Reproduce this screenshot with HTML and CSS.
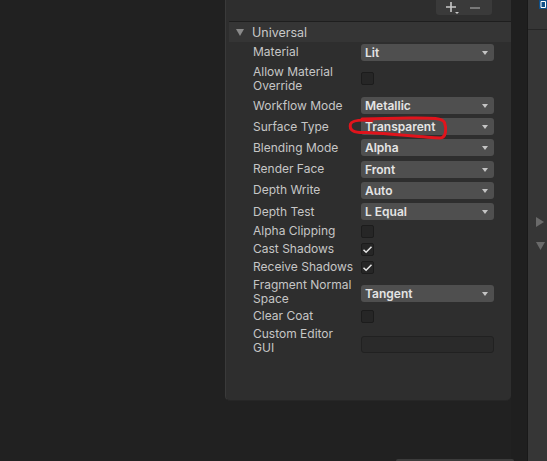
FILE: index.html
```html
<!DOCTYPE html>
<html>
<head>
<meta charset="utf-8">
<link rel="stylesheet" href="styles.css">
</head>
<body>
<div class="left-space"></div>
<div class="panel">
  <div class="panel-top">
    <div class="list-buttons">
      <span class="btn-plus">
        <svg width="14" height="14" viewBox="0 0 14 14"><path d="M6 1v10M1 6h10" stroke="#c8c8c8" stroke-width="1.6" fill="none"/><path d="M10 11h4l-2 2z" fill="#c8c8c8"/></svg>
      </span>
      <span class="btn-minus">
        <svg width="12" height="12" viewBox="0 0 12 12"><path d="M1 6h10" stroke="#8a8a8a" stroke-width="1.6"/></svg>
      </span>
    </div>
  </div>
  <div class="header">
    <svg class="fold" width="8" height="7" viewBox="0 0 8 7"><path d="M0 0h8L4 7z" fill="#8a8a8a"/></svg>
    <span class="header-title">Universal</span>
  </div>
  <div class="rows">
    <div class="row h20"><div class="label">Material</div><div class="field"><div class="dropdown">Lit</div></div></div>
    <div class="row h33"><div class="label">Allow Material<br>Override</div><div class="field"><div class="check"></div></div></div>
    <div class="row h21"><div class="label">Workflow Mode</div><div class="field"><div class="dropdown">Metallic</div></div></div>
    <div class="row h21"><div class="label">Surface Type</div><div class="field"><div class="dropdown">Transparent</div></div></div>
    <div class="row h21"><div class="label">Blending Mode</div><div class="field"><div class="dropdown">Alpha</div></div></div>
    <div class="row h21"><div class="label">Render Face</div><div class="field"><div class="dropdown">Front</div></div></div>
    <div class="row h21"><div class="label">Depth Write</div><div class="field"><div class="dropdown">Auto</div></div></div>
    <div class="row h21"><div class="label">Depth Test</div><div class="field"><div class="dropdown">L Equal</div></div></div>
    <div class="row h18"><div class="label">Alpha Clipping</div><div class="field"><div class="check"></div></div></div>
    <div class="row h18"><div class="label">Cast Shadows</div><div class="field"><div class="check"><svg width="11" height="11" viewBox="0 0 11 11"><path d="M1.5 5.8l2.6 2.5 5.4-5.6" stroke="#e6e6e6" stroke-width="1.5" fill="none"/></svg></div></div></div>
    <div class="row h18"><div class="label">Receive Shadows</div><div class="field"><div class="check"><svg width="11" height="11" viewBox="0 0 11 11"><path d="M1.5 5.8l2.6 2.5 5.4-5.6" stroke="#e6e6e6" stroke-width="1.5" fill="none"/></svg></div></div></div>
    <div class="row h31"><div class="label">Fragment Normal<br>Space</div><div class="field"><div class="dropdown low">Tangent</div></div></div>
    <div class="row h18"><div class="label">Clear Coat</div><div class="field"><div class="check"></div></div></div>
    <div class="row h32"><div class="label">Custom Editor<br>GUI</div><div class="field bottom"><div class="textbox"></div></div></div>
  </div>
  <svg class="annotation" width="110" height="30" viewBox="345 113 110 30"><path d="M372 120.5 C360 119.5 352 120 350.5 124 C349 130 353 133 366 132.5 C392 133.5 422 137.5 440 138 C446.5 138 446.5 128 444.5 122.5 C442.5 117.5 430 118 410 118 L362 119" stroke="#e0141c" stroke-width="3" fill="none" stroke-linecap="round" stroke-linejoin="round"/></svg>
</div>
<div class="gap-strip"></div>
<div class="right-col">
  <div class="right-top">
    <div class="blue-icon"><svg width="8" height="9" viewBox="0 0 8 9"><path d="M2 1.5h4.5v6H2z" stroke="#ffffff" stroke-width="1" fill="none"/></svg></div>
  </div>
  <div class="right-body">
    <svg class="tri" width="8" height="10" viewBox="0 0 8 10"><path d="M0 0l8 5-8 5z" fill="#6a6a6a"/></svg>
    <svg class="tri down" width="9" height="8" viewBox="0 0 9 8"><path d="M0 0h9L4.5 8z" fill="#6a6a6a"/></svg>
  </div>
</div>
<div class="bottom-tab"></div>
</body>
</html>
```

FILE: styles.css
```css
html, body {
  margin: 0;
  padding: 0;
}
body {
  width: 547px;
  height: 461px;
  overflow: hidden;
  background: #212121;
  display: flex;
  align-items: flex-start;
  font-family: Inter, "Noto Sans", sans-serif;
  font-size: 12px;
  color: #c4c4c4;
  position: relative;
}
.left-space {
  width: 225px;
  flex: none;
}
.panel {
  position: relative;
  width: 286px;
  height: 401px;
  flex: none;
  box-sizing: border-box;
  background: #2e2e2e;
  border-left: 1px solid #3a3a3a;
  border-bottom: 1px solid #262626;
  border-radius: 0 0 5px 5px;
}
.panel-top {
  height: 21px;
  display: flex;
  justify-content: flex-end;
  padding-right: 19px;
}
.list-buttons {
  width: 56px;
  height: 15px;
  background: #3a3a3a;
  border-radius: 0 0 3px 3px;
  display: flex;
  align-items: center;
  box-sizing: border-box;
  padding-left: 9px;
  gap: 10px;
}
.btn-plus, .btn-minus {
  display: flex;
  align-items: center;
}
.btn-plus svg { margin-top: 1px; }
.header {
  margin-left: 3px;
  height: 20px;
  border-top: 1px solid #1e1e1e;
  background: #353535;
  display: flex;
  align-items: center;
  padding-left: 7px;
}
.fold {
  margin-right: 8px;
}
.header-title {
  color: #c8c8c8;
  font-size: 12.5px;
}
.rows {
  display: flex;
  flex-direction: column;
  padding-left: 27px;
}
.row {
  display: flex;
  align-items: center;
  flex: none;
}
.h18 { height: 18px; }
.h20 { height: 20px; }
.h21 { height: 21.2px; }
.h31 { height: 31px; }
.h32 { height: 32px; }
.h33 { height: 33px; }
.label {
  width: 108px;
  flex: none;
  line-height: 14px;
  color: #c6c6c6;
  white-space: nowrap;
}
.field {
  width: 133px;
  flex: none;
  display: flex;
  align-items: center;
}
.field.bottom {
  align-self: flex-end;
  margin-bottom: 4px;
}
.dropdown {
  position: relative;
  width: 100%;
  height: 17px;
  box-sizing: border-box;
  background: #4f4f4f;
  border-radius: 3px;
  padding-left: 4px;
  line-height: 17px;
  font-weight: 600;
  color: #e4e4e4;
  font-size: 12px;
}
.dropdown.low {
  margin-top: 3px;
}
.dropdown::after {
  content: "";
  position: absolute;
  right: 6px;
  top: 7px;
  border-left: 3.5px solid transparent;
  border-right: 3.5px solid transparent;
  border-top: 4px solid #c4c4c4;
}
.check {
  width: 13px;
  height: 13px;
  box-sizing: border-box;
  background: #262626;
  border: 1px solid #1c1c1c;
  border-radius: 2px;
  display: flex;
  align-items: center;
  justify-content: center;
}
.textbox {
  width: 100%;
  height: 17px;
  box-sizing: border-box;
  background: #2a2a2a;
  border: 1px solid #212121;
  border-radius: 3px;
}
.annotation {
  position: absolute;
  left: 119px;
  top: 113px;
}
.gap-strip {
  width: 16px;
  height: 461px;
  flex: none;
  background: #1f1f1f;
  border-right: 1px solid #191919;
}
.right-col {
  flex: 1;
  height: 461px;
  background: #363636;
  display: flex;
  flex-direction: column;
}
.right-top {
  height: 29px;
  border-bottom: 1px solid #262626;
  display: flex;
  justify-content: flex-end;
}
.blue-icon {
  width: 8px;
  height: 9px;
  background: #0e4f88;
  display: flex;
}
.right-body {
  display: flex;
  flex-direction: column;
  padding-left: 8px;
  padding-top: 187px;
}
.tri.down {
  margin-top: 15px;
}
.bottom-tab {
  position: absolute;
  left: 396px;
  top: 459px;
  width: 118px;
  height: 4px;
  background: #3c3c3c;
  border-radius: 2px;
}
```
